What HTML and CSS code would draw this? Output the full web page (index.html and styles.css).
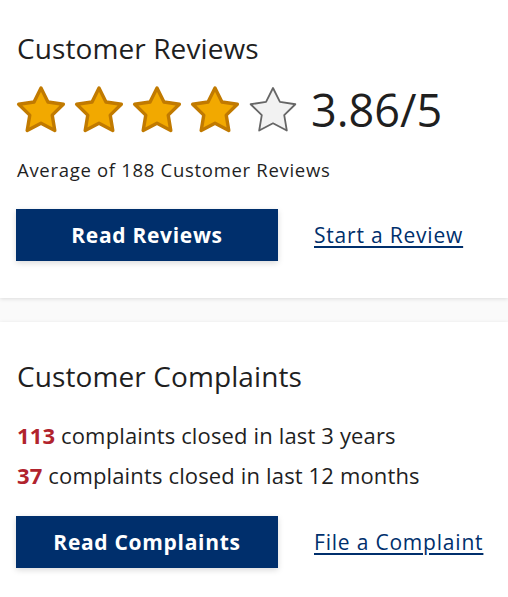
FILE: index.html
```html
<!DOCTYPE html>
<html lang="en">
<head>
<meta charset="utf-8">
<title>Customer Reviews</title>
<link rel="stylesheet" href="styles.css">
</head>
<body>
<section class="card card-reviews">
  <h2 class="card-title">Customer Reviews</h2>
  <div class="rating-row">
    <div class="stars">
      <svg class="star star-full" viewBox="0 0 48 48" width="48" height="48"><polygon points="24,2 30.94,15.95 46.35,18.24 35.22,29.15 37.81,44.51 24,37.3 10.19,44.51 12.78,29.15 1.65,18.24 17.06,15.95"/></svg>
      <svg class="star star-full" viewBox="0 0 48 48" width="48" height="48"><polygon points="24,2 30.94,15.95 46.35,18.24 35.22,29.15 37.81,44.51 24,37.3 10.19,44.51 12.78,29.15 1.65,18.24 17.06,15.95"/></svg>
      <svg class="star star-full" viewBox="0 0 48 48" width="48" height="48"><polygon points="24,2 30.94,15.95 46.35,18.24 35.22,29.15 37.81,44.51 24,37.3 10.19,44.51 12.78,29.15 1.65,18.24 17.06,15.95"/></svg>
      <svg class="star star-full" viewBox="0 0 48 48" width="48" height="48"><polygon points="24,2 30.94,15.95 46.35,18.24 35.22,29.15 37.81,44.51 24,37.3 10.19,44.51 12.78,29.15 1.65,18.24 17.06,15.95"/></svg>
      <svg class="star star-empty" viewBox="0 0 48 48" width="48" height="48"><polygon points="24,2 30.94,15.95 46.35,18.24 35.22,29.15 37.81,44.51 24,37.3 10.19,44.51 12.78,29.15 1.65,18.24 17.06,15.95"/></svg>
    </div>
    <span class="rating-value">3.86/5</span>
  </div>
  <p class="rating-note">Average of 188 Customer Reviews</p>
  <div class="actions">
    <a class="btn" href="#">Read Reviews</a>
    <a class="link" href="#">Start a Review</a>
  </div>
</section>
<section class="card card-complaints">
  <h2 class="card-title">Customer Complaints</h2>
  <p class="stat"><strong>113</strong> complaints closed in last 3 years</p>
  <p class="stat"><strong>37</strong> complaints closed in last 12 months</p>
  <div class="actions">
    <a class="btn" href="#">Read Complaints</a>
    <a class="link" href="#">File a Complaint</a>
  </div>
</section>
</body>
</html>
```
FILE: styles.css
```css
html, body {
  margin: 0;
  padding: 0;
}
body {
  background: #fafafa;
  font-family: "Open Sans", "Lato", sans-serif;
  color: #1f1f1f;
  width: 508px;
}
.card {
  background: #ffffff;
  box-shadow: 0 1px 4px rgba(0, 0, 0, 0.12);
  padding: 0 17px;
}
.card-reviews {
  padding-top: 31px;
  padding-bottom: 37px;
  margin-bottom: 24px;
}
.card-complaints {
  padding-top: 37px;
  padding-bottom: 40px;
}
.card-title {
  margin: 0;
  font-size: 28px;
  font-weight: 400;
  line-height: 34px;
  letter-spacing: 0.1px;
}
.rating-row {
  display: flex;
  align-items: center;
  margin-top: 21px;
}
.stars {
  display: flex;
  gap: 10px;
}
.star {
  display: block;
  overflow: visible;
}
.star polygon {
  stroke-width: 3.4;
  stroke-linejoin: round;
}
.star-full polygon {
  fill: #f2a900;
  stroke: #c17a00;
}
.star-empty polygon {
  fill: #f2f2f2;
  stroke: #666666;
  stroke-width: 1.8;
}
.rating-value {
  font-size: 45px;
  line-height: 48px;
  margin-left: 14px;
}
.rating-note {
  margin: 24px 0 0;
  font-size: 18.5px;
  line-height: 24px;
  letter-spacing: 0.7px;
}
.actions {
  display: flex;
  align-items: center;
  margin-top: 27px;
  margin-left: -1px;
}
.btn {
  display: flex;
  align-items: center;
  justify-content: center;
  width: 262px;
  height: 52px;
  background: #002f6c;
  color: #ffffff;
  font-weight: 700;
  font-size: 21px;
  letter-spacing: 0.7px;
  text-decoration: none;
  box-shadow: 0 2px 6px rgba(0, 0, 0, 0.15);
}
.link {
  margin-left: 36px;
  font-size: 21px;
  letter-spacing: 0.8px;
  color: #002f6c;
  text-decoration: underline;
  text-underline-offset: 3px;
}
.stat {
  margin: 0;
  font-size: 22px;
  line-height: 40px;
  letter-spacing: 0.15px;
}
.card-complaints .card-title {
  margin-bottom: 21.5px;
}
.card-complaints .actions {
  margin-top: 21.5px;
}
.stat strong {
  color: #b1232d;
  font-weight: 700;
}
```
